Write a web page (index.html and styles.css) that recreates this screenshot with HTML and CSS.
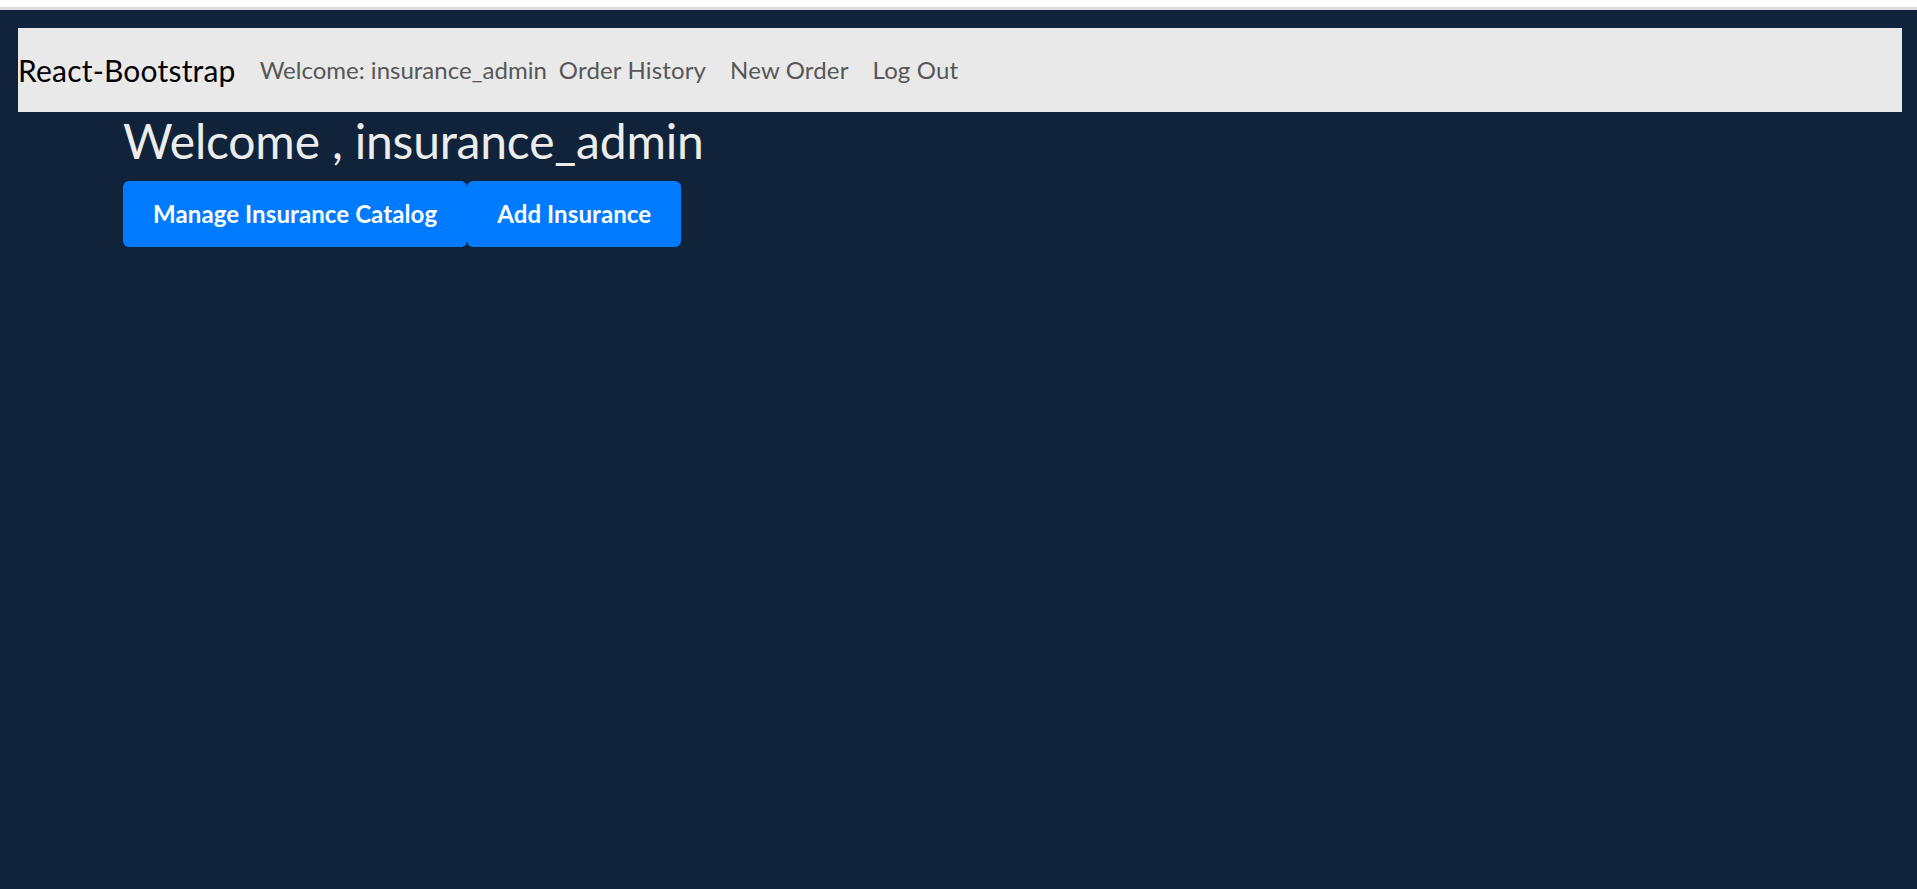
FILE: index.html
```html
<!DOCTYPE html>
<html lang="en">
<head>
<meta charset="utf-8">
<title>React-Bootstrap</title>
<link rel="stylesheet" href="styles.css">
</head>
<body>
<div class="chrome-strip"></div>
<div class="page">
  <nav class="navbar">
    <a class="brand" href="#">React-Bootstrap</a>
    <span class="navbar-text">Welcome: insurance_admin</span>
    <a class="nav-link" href="#">Order History</a>
    <a class="nav-link" href="#">New Order</a>
    <a class="nav-link" href="#">Log Out</a>
  </nav>
  <main class="content">
    <h2 class="welcome">Welcome , insurance_admin</h2>
    <div class="actions">
      <button class="btn">Manage Insurance Catalog</button>
      <button class="btn">Add Insurance</button>
    </div>
  </main>
</div>
</body>
</html>
```

FILE: styles.css
```css
html, body {
  margin: 0;
  padding: 0;
}

body {
  background: #10233a;
  font-family: Lato, "Open Sans", sans-serif;
  min-height: 889px;
}

.chrome-strip {
  height: 7px;
  background: #ffffff;
  border-bottom: 3px solid #dcdcdc;
}

.page {
  padding: 18px 15px 0 18px;
}

.navbar {
  display: flex;
  align-items: center;
  height: 84px;
  background: #e9e9e9;
  box-sizing: border-box;
  padding: 12px 0;
}

.brand {
  font-size: 30px;
  line-height: 45px;
  color: #000;
  text-decoration: none;
  letter-spacing: 0.2px;
  margin-right: 24px;
}

.navbar-text {
  font-size: 24px;
  line-height: 36px;
  color: #575757;
}

.nav-link {
  font-size: 24px;
  line-height: 36px;
  color: #575757;
  text-decoration: none;
  letter-spacing: 0.15px;
  padding: 0 12px;
}

.content {
  padding-left: 105px;
}

.welcome {
  margin: 0 0 12px;
  font-size: 48px;
  font-weight: 400;
  line-height: 57px;
  letter-spacing: -0.2px;
  color: #ececec;
}

.actions {
  display: flex;
}

.btn {
  font-family: Lato, "Open Sans", sans-serif;
  font-size: 24px;
  font-weight: 700;
  line-height: 36px;
  letter-spacing: 0.1px;
  padding: 15px 30px;
  color: #ffffff;
  background: #007bff;
  border: 0;
  border-radius: 6px;
  cursor: pointer;
}
```
